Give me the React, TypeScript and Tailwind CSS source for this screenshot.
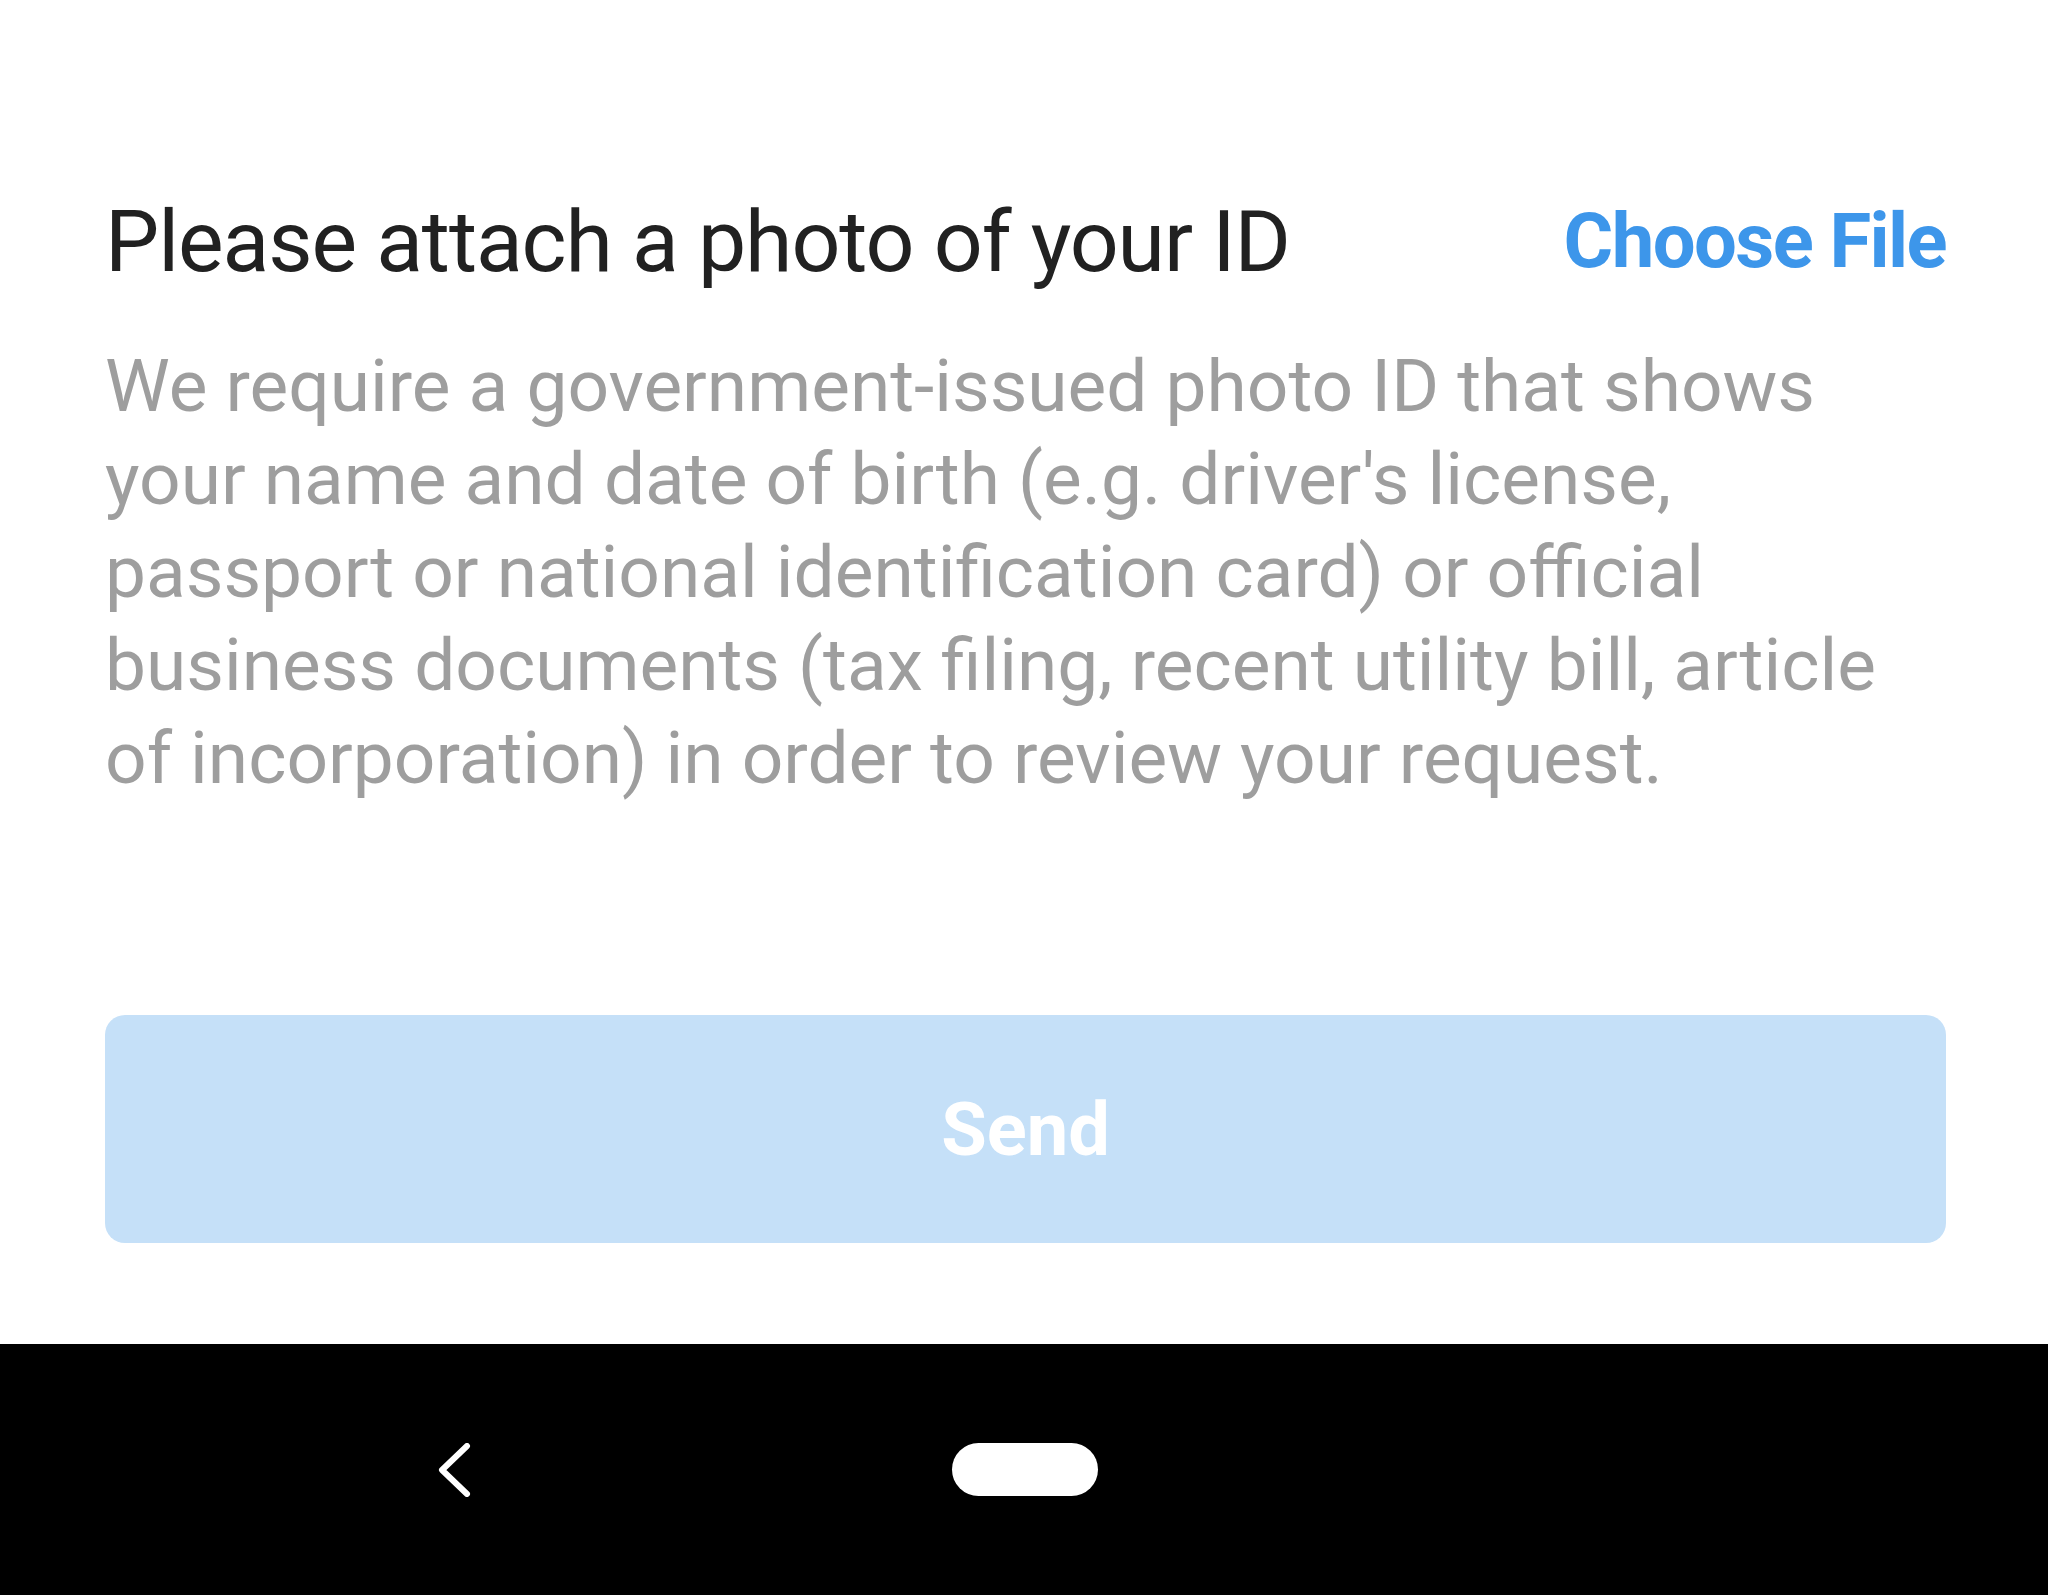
import React from "react";

const descLines = [
  "We require a government-issued photo ID that shows",
  "your name and date of birth (e.g. driver's license,",
  "passport or national identification card) or official",
  "business documents (tax filing, recent utility bill, article",
  "of incorporation) in order to review your request.",
];

export default function App() {
  return (
    <div className="flex h-[1595px] w-full flex-col bg-white font-['Roboto',sans-serif]">
      <main className="flex flex-1 flex-col px-[105px] pr-[102px] pt-[190px]">
        <div className="flex items-start justify-between">
          <h1 className="text-[86px] leading-[103px] font-normal tracking-[-1.1px] text-[#212121]">
            Please attach a photo of your ID
          </h1>
          <button className="text-[76px] leading-[103px] font-bold tracking-[-1.6px] text-[#3d96ea]">
            Choose File
          </button>
        </div>

        <p className="mt-[47px] text-[73px] leading-[93px] text-[#9e9e9e]">
          {descLines.map((line) => (
            <span key={line} className="block whitespace-nowrap">
              {line}
            </span>
          ))}
        </p>

        <button
          disabled
          className="mt-[210px] flex h-[228px] w-full items-center justify-center rounded-[20px] bg-[#c5e0f8] text-[74px] font-bold text-white"
        >
          Send
        </button>
      </main>

      {/* android nav bar */}
      <nav className="flex h-[251px] items-center bg-black">
        <div className="flex w-full items-center">
          <div className="ml-[436px] flex h-[54px] w-[36px] items-center justify-center">
            <svg width="34" height="54" viewBox="0 0 34 54" fill="none">
              <path
                d="M30 3 L5 27 L30 51"
                stroke="white"
                strokeWidth="6"
                strokeLinecap="round"
                strokeLinejoin="round"
              />
            </svg>
          </div>
          <div className="ml-[480px] h-[53px] w-[146px] rounded-full bg-white" />
        </div>
      </nav>
    </div>
  );
}
